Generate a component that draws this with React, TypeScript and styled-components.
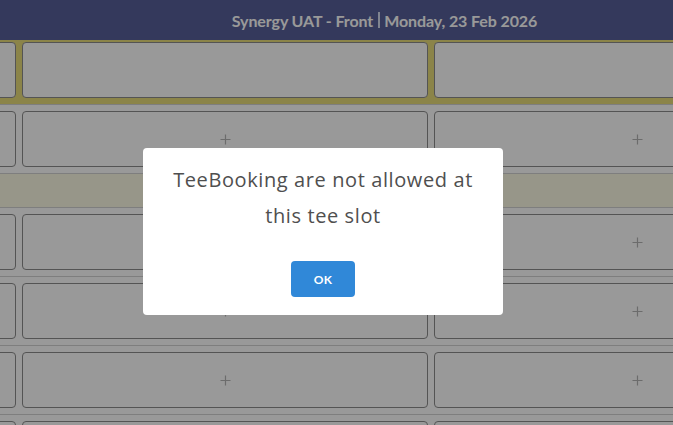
import React from 'react';
import styled, { createGlobalStyle } from 'styled-components';

const GlobalStyle = createGlobalStyle`
  html, body {
    margin: 0;
    padding: 0;
    overflow: hidden;
    background: #ffffff;
    font-family: Lato, "Open Sans", sans-serif;
  }
`;

const Page = styled.div`
  width: 673px;
  height: 425px;
  overflow: hidden;
  display: flex;
  flex-direction: column;
`;

// 상단 바
const Header = styled.header`
  height: 40px;
  flex-shrink: 0;
  background: #575f99;
  display: flex;
  align-items: center;
  justify-content: center;
  padding-left: 96px;
  color: #ffffff;
  font-size: 16px;
  font-weight: 700;
  letter-spacing: -0.1px;
`;

const Divider = styled.span`
  display: inline-block;
  width: 0;
  height: 16px;
  border-left: 2px solid #d6dcf0;
  margin: 0 4px 0 5px;
`;

const Sheet = styled.div`
  flex: 1;
  overflow: hidden;
`;

const Row = styled.div<{ $tone?: 'olive' | 'plain'; $top?: number }>`
  display: grid;
  grid-template-columns: repeat(3, 406px);
  gap: 6px;
  margin-left: -390px;
  padding: ${p => p.$top ?? 6}px 0 6px;
  background: ${p => (p.$tone === 'olive' ? '#e8dc7a' : '#ffffff')};
  border-bottom: 1px solid #d2d2d2;
`;

const Band = styled.div`
  height: 33px;
  background: #fcfae4;
  border-bottom: 1px solid #d2d2d2;
`;

const Slot = styled.div`
  height: 56px;
  box-sizing: border-box;
  border: 1px solid #8c8c8c;
  border-radius: 4px;
  background: #ffffff;
  display: flex;
  align-items: center;
  justify-content: center;
`;

const PlusIcon = () => (
  <svg width="11" height="11" viewBox="0 0 11 11">
    <path d="M5.5 0.5v10M0.5 5.5h10" stroke="#b4b4b4" strokeWidth="1.2" />
  </svg>
);

// 모달
const Overlay = styled.div`
  position: fixed;
  inset: 0;
  background: rgba(0, 0, 0, 0.4);
  display: flex;
  justify-content: center;
  align-items: flex-start;
  padding: 148px 27px 0 0;
`;

const Dialog = styled.div`
  width: 360px;
  box-sizing: border-box;
  background: #ffffff;
  border-radius: 4px;
  padding: 14px 28px 18px;
  display: flex;
  flex-direction: column;
  align-items: center;
`;

const Message = styled.p`
  margin: 0;
  text-align: center;
  font-family: "Open Sans", Lato, sans-serif;
  font-size: 20px;
  font-weight: 500;
  letter-spacing: 0.6px;
  line-height: 36px;
  color: #4f4f4f;
`;

const OkButton = styled.button`
  margin-top: 27px;
  width: 64px;
  height: 36px;
  border: none;
  border-radius: 4px;
  background: #3088d8;
  color: #ffffff;
  font-family: Lato, sans-serif;
  font-size: 12px;
  font-weight: 700;
  letter-spacing: 0.3px;
`;

const rows = [0, 1, 2, 3, 4];

const App = () => {
  return (
    <>
      <GlobalStyle />
      <Page>
        <Header>
          Synergy UAT - Front<Divider />Monday, 23 Feb 2026
        </Header>
        <Sheet>
          <Row $tone="olive" $top={2}>
            <Slot />
            <Slot />
            <Slot />
          </Row>
          {rows.map(i => (
            <React.Fragment key={i}>
              <Row>
                <Slot><PlusIcon /></Slot>
                <Slot><PlusIcon /></Slot>
                <Slot><PlusIcon /></Slot>
              </Row>
              {i === 0 && <Band />}
            </React.Fragment>
          ))}
        </Sheet>
      </Page>
      <Overlay>
        <Dialog>
          <Message>TeeBooking are not allowed at this tee slot</Message>
          <OkButton>OK</OkButton>
        </Dialog>
      </Overlay>
    </>
  );
};

export default App;
